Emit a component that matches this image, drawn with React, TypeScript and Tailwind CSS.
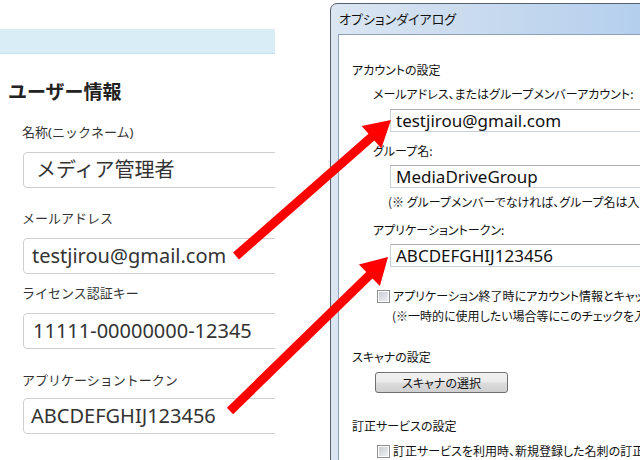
import React from 'react'

type Pt = [number, number]

// red callout arrow from tail to tip, drawn as one polygon
function arrowPoints(tail: Pt, tip: Pt, shaft = 4.5, headLen = 26, headHalf = 15) {
  const dx = tip[0] - tail[0]
  const dy = tip[1] - tail[1]
  const len = Math.hypot(dx, dy)
  const ux = dx / len
  const uy = dy / len
  const px = -uy
  const py = ux
  const bx = tip[0] - ux * headLen
  const by = tip[1] - uy * headLen
  const pts: Pt[] = [
    [tail[0] + px * shaft, tail[1] + py * shaft],
    [bx + px * shaft, by + py * shaft],
    [bx + px * headHalf, by + py * headHalf],
    tip,
    [bx - px * headHalf, by - py * headHalf],
    [bx - px * shaft, by - py * shaft],
    [tail[0] - px * shaft, tail[1] - py * shaft],
  ]
  return pts.map((p) => `${p[0].toFixed(1)},${p[1].toFixed(1)}`).join(' ')
}

const jp = "font-['Noto_Sans','Noto_Sans_CJK_JP',sans-serif]"
const ui = "font-['Noto_Sans_CJK_JP',sans-serif] [font-feature-settings:'palt'] text-[12px] leading-[18px] text-[#111]"
const winInput =
  "h-[23px] w-[320px] border border-[#c9d1dc] border-t-[#abadb3] bg-white flex items-center pl-[5px] text-[17px] text-[#111] font-['Noto_Sans',sans-serif] whitespace-nowrap"

function Checkbox() {
  return (
    <div className="w-[13px] h-[13px] shrink-0 border border-[#8e8f8f] bg-white p-[1px]">
      <div className="w-full h-full bg-[linear-gradient(135deg,#c9ccd1,#eef0f2)]" />
    </div>
  )
}

export default function App() {
  return (
    <div className="relative w-[640px] h-[460px] overflow-hidden bg-white flex">
      {/* web page side */}
      <div className={`w-[330px] shrink-0 ${jp}`}>
        <div className="mt-[29px] h-[25px] w-[275px] bg-[#d9edf7] border-b border-[#c4e2ef]" />
        <div className="w-[275px] overflow-hidden">
          <h2 className="mt-[25px] pl-[8px] text-[19px] leading-[26px] font-bold text-[#222]">ユーザー情報</h2>

          <div className="mt-[17px] pl-[22px] text-[13px] leading-[20px] text-[#333]">名称(ニックネーム)</div>
          <div className="mt-[10px] ml-[23px] w-[290px] h-[36px] border border-[#cfcfcf] rounded-[4px] flex items-center pl-[12px] text-[20px] text-[#333]">
            メディア管理者
          </div>

          <div className="mt-[20px] pl-[22px] text-[13px] leading-[20px] text-[#333]">メールアドレス</div>
          <div className="mt-[10px] ml-[23px] w-[290px] h-[36px] border border-[#cfcfcf] rounded-[4px] flex items-center pl-[8px] text-[20px] text-[#333]">
            testjirou@gmail.com
          </div>

          <div className="mt-[9px] pl-[22px] text-[13px] leading-[20px] text-[#333]">ライセンス認証キー</div>
          <div className="mt-[10px] ml-[23px] w-[290px] h-[36px] border border-[#cfcfcf] rounded-[4px] flex items-center pl-[9px] text-[20px] text-[#333]">
            11111-00000000-12345
          </div>

          <div className="mt-[21px] pl-[22px] text-[13px] leading-[20px] text-[#333]">アプリケーショントークン</div>
          <div className="mt-[8px] ml-[23px] w-[290px] h-[36px] border border-[#cfcfcf] rounded-[4px] flex items-center pl-[7px] text-[20px] text-[#333]">
            ABCDEFGHIJ123456
          </div>
        </div>
      </div>

      {/* options dialog */}
      <div className="mt-[3px] w-[420px] h-[470px] shrink-0 rounded-tl-[7px] border border-[#56606d] bg-[linear-gradient(90deg,#dbe6f2,#c6d9ee_40%,#a6c8ee)] flex flex-col">
        <div className={`h-[30px] pl-[8px] flex items-center ${ui} text-[13px]`}>オプションダイアログ</div>
        <div className="flex-1 ml-[7px] border-l border-t border-[#8ea3bb] bg-white">
          <div className={`pt-[26px] ${ui} whitespace-nowrap`}>
            <div className="pl-[13px]">アカウントの設定</div>
            <div className="mt-[6px] pl-[34px]">メールアドレス、またはグループメンバーアカウント:</div>
            <div className={`mt-[6px] ml-[51px] ${winInput}`}>testjirou@gmail.com</div>

            <div className="mt-[10px] pl-[34px]">グループ名:</div>
            <div className={`mt-[5px] ml-[51px] ${winInput}`}>MediaDriveGroup</div>
            <div className="mt-[5px] pl-[49px]">(※ グループメンバーでなければ、グループ名は入力不要です)</div>

            <div className="mt-[10px] pl-[34px]">アプリケーショントークン:</div>
            <div className={`mt-[5px] ml-[51px] ${winInput}`}>ABCDEFGHIJ123456</div>

            <div className="mt-[20px] pl-[38px] flex items-center gap-[3px]">
              <Checkbox />
              <span>アプリケーション終了時にアカウント情報とキャッシュを削除する</span>
            </div>
            <div className="mt-[2px] pl-[53px]">(※一時的に使用したい場合等にこのチェックを入れてください)</div>

            <div className="mt-[23px] pl-[13px]">スキャナの設定</div>
            <div className="mt-[6px] ml-[36px] w-[133px] h-[21px] rounded-[3px] border border-[#707070] bg-[linear-gradient(#f2f2f2,#ebebeb_48%,#dddddd_52%,#cfcfcf)] flex items-center justify-center">
              スキャナの選択
            </div>

            <div className="mt-[24px] pl-[13px]">訂正サービスの設定</div>
            <div className="mt-[7px] pl-[38px] flex items-center gap-[3px]">
              <Checkbox />
              <span>訂正サービスを利用時、新規登録した名刺の訂正を行う</span>
            </div>
          </div>
        </div>
      </div>

      {/* callout arrows */}
      <svg className="absolute inset-0 pointer-events-none" width="640" height="460" viewBox="0 0 640 460">
        <polygon points={arrowPoints([236, 256], [391, 120])} fill="#ff0000" />
        <polygon points={arrowPoints([230, 411], [388, 257])} fill="#ff0000" />
      </svg>
    </div>
  )
}
